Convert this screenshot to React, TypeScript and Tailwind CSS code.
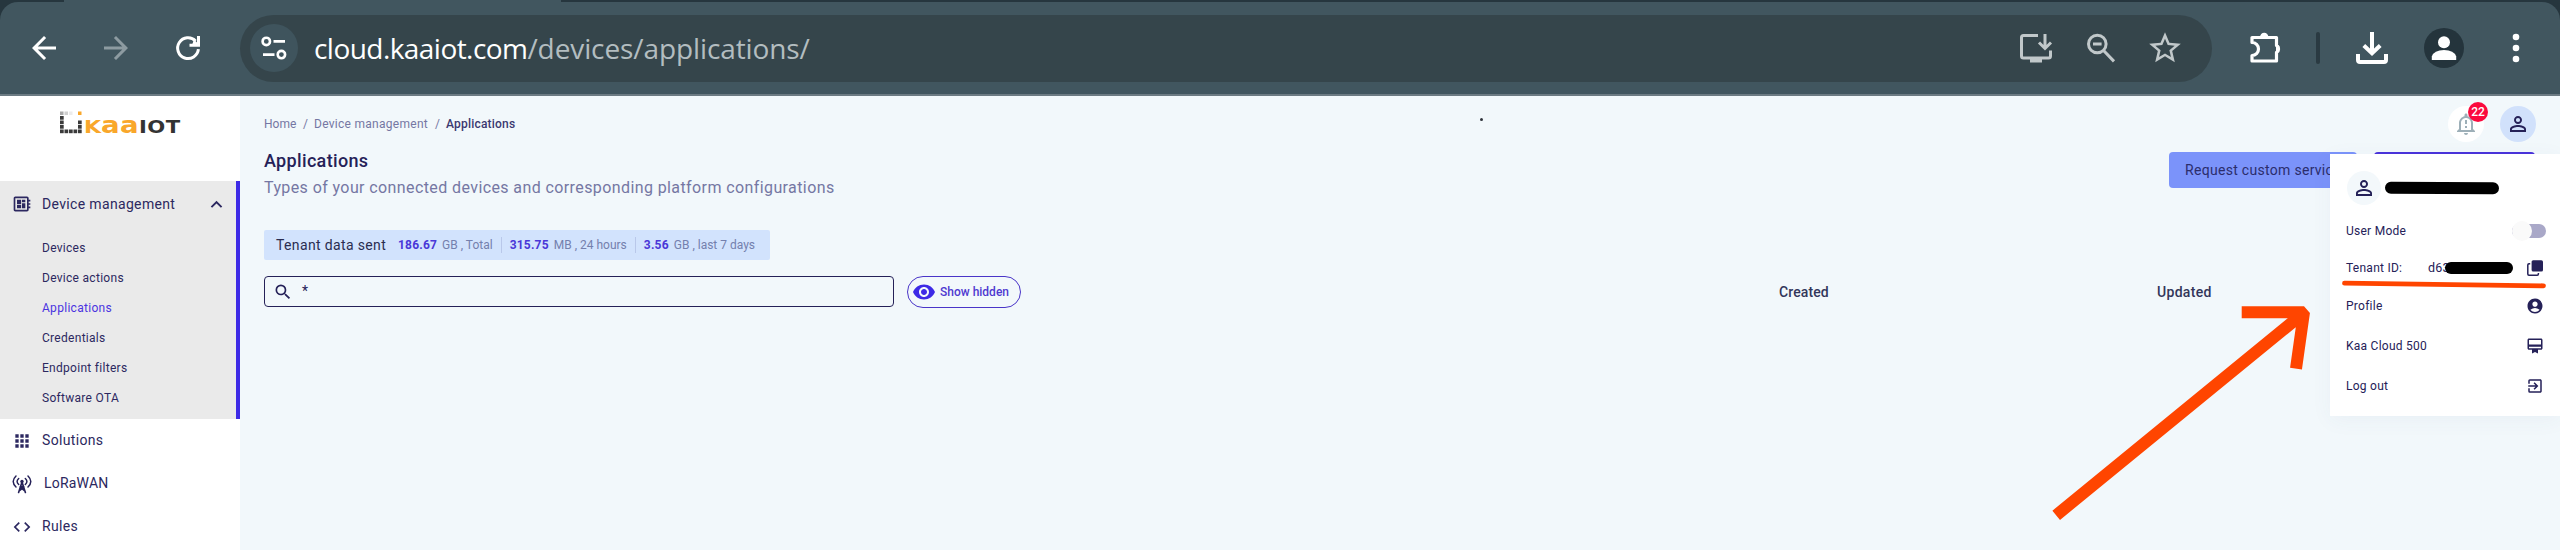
import React from "react";
import {
  MdAccountCircle,
  MdApps,
  MdArrowBack,
  MdArrowForward,
  MdCode,
  MdDeveloperBoard,
  MdExitToApp,
  MdExpandLess,
  MdOutlineCardMembership,
  MdOutlineNotificationImportant,
  MdPersonOutline,
  MdSearch,
  MdStarBorder,
  MdVisibility,
} from "react-icons/md";

function ReloadIcon() {
  return (
    <svg className="ml-[36px] size-[36px]" viewBox="0 0 36 36" fill="none" stroke="#fff" strokeWidth="3">
      <path d="M28.4 19.2A10.4 10.4 0 1 1 25.6 11" />
      <path d="M28.5 6V15.3H19.5" strokeWidth="3" />
      <path d="M24 9.5L28 13.5V15H22Z" fill="#fff" stroke="none" />
    </svg>
  );
}

function TuneIcon() {
  return (
    <svg className="size-[30px]" viewBox="0 0 30 30" fill="none" stroke="#fff" strokeWidth="2.6">
      <circle cx="7.3" cy="8.4" r="3.7" />
      <path d="M14.5 8.4H26M4 21.6H15.5" />
      <circle cx="22.4" cy="21.6" r="3.7" />
    </svg>
  );
}

function InstallIcon() {
  return (
    <svg className="h-[32px] w-[34px]" viewBox="0 0 34 32" fill="none" stroke="#c1c8ca" strokeWidth="3">
      <path d="M19 3.5H4.5Q2.5 3.5 2.5 5.5V24Q2.5 26 4.5 26H29.5Q31.5 26 31.5 24V18.5" />
      <path d="M11 26H23V30.5H11Z" fill="#c1c8ca" stroke="none" />
      <path d="M26 2V16M20 10.5L26 16.5L32 10.5" />
    </svg>
  );
}

function ZoomOutIcon() {
  return (
    <svg className="ml-[33px] h-[30px] w-[30px]" viewBox="0 0 30 30" fill="none" stroke="#c1c8ca" strokeWidth="3">
      <circle cx="11.3" cy="11" r="8.8" />
      <path d="M7 11H15.6M17.8 17.8L28 28.4" />
    </svg>
  );
}

function PuzzleIcon() {
  return (
    <svg className="h-[36px] w-[36px]" viewBox="0 0 36 36">
      <path
        d="M6.5 7.5H29.500V15.5A4 4 0 0 1 29.500 22.500V31H5V25.500A6.200 6.200 0 0 0 5 12.500V7.500Z"
        fill="none"
        stroke="#fff"
        strokeWidth="3.2"
        strokeLinejoin="round"
      />
      <path d="M13 7.500A4.200 4.800 0 0 1 21.400 7.500ZM29 14A4.600 4.600 0 0 1 29 23Z" fill="#fff" />
    </svg>
  );
}

function DownloadIcon() {
  return (
    <svg className="ml-[36px] h-[32px] w-[32px]" viewBox="0 0 32 32" fill="none" stroke="#fff" strokeWidth="4">
      <path d="M16 0V21M7.800 13.500L16 21.300L24.200 13.500" />
      <path d="M2 22V28Q2 30 4 30H28Q30 30 30 28V22" />
    </svg>
  );
}

function AntennaIcon() {
  return (
    <svg className="size-[20px]" viewBox="0 0 20 20" fill="none" stroke="#252158" strokeWidth="1.500" strokeLinecap="round">
      <path d="M4 2Q-1.600 7.500 4 13M16 2Q21.600 7.500 16 13" />
      <path d="M6.700 4.500Q3.500 7.500 6.700 10.500M13.300 4.500Q16.500 7.500 13.300 10.500" />
      <circle cx="10" cy="7.500" r="1.700" fill="#252158" stroke="none" />
      <path d="M10 8L6.600 18.500M10 8L13.400 18.500M8.500 12.500H11.500M7.500 16.500L12 13M12.500 16.500L8 13" strokeWidth="1.600" />
    </svg>
  );
}

function CopyIcon() {
  return (
    <svg className="size-[18px]" viewBox="0 0 18 18">
      <rect x="5.600" y="1.200" width="11.400" height="11.400" rx="1.600" fill="#252158" />
      <path d="M4.200 4.800H3Q1.800 4.800 1.800 6V15Q1.800 16.200 3 16.200H11.200Q12.400 16.200 12.400 15V14" fill="none" stroke="#252158" strokeWidth="1.500" />
    </svg>
  );
}

function Logo() {
  const dark = [
    [0, 5], [0, 9.5], [0, 14], [0, 18.5], [4.5, 18.5], [9, 18.5], [13.5, 18.5], [18, 18.5], [18, 14], [18, 9.5],
  ];
  return (
    <svg className="h-[40px] w-[130px]" viewBox="0 -8 130 40" fontFamily="DejaVu Sans" fontWeight="700">
      <rect x="0" y="0.500" width="3.500" height="3.500" fill="#a9a9a9" />
      <rect x="4.500" y="0.500" width="3.500" height="3.500" fill="#cfcfcf" />
      <rect x="9" y="0.500" width="3.500" height="3.500" fill="#ececec" />
      <rect x="18" y="0.500" width="3.500" height="3.500" fill="#f9a72b" />
      {dark.map(([x, y]) => (
        <rect key={`${x}-${y}`} x={x} y={y} width="3.700" height="3.700" fill="#3a3a3a" />
      ))}
      <g fill="#f9a72b">
        <text x="24" y="22.300" fontSize="18" textLength="17.500" lengthAdjust="spacingAndGlyphs">K</text>
        <text x="41" y="22.300" fontSize="23.500" textLength="38" lengthAdjust="spacingAndGlyphs">aa</text>
      </g>
      <text x="79" y="22.300" fontSize="18" fill="#333" textLength="41.500" lengthAdjust="spacingAndGlyphs">IOT</text>
    </svg>
  );
}

function BrowserBar() {
  return (
    <header className="flex h-[96px] flex-col border-b-2 border-[#6c7b83] bg-[#26363e]">
      <div className="flex h-[2px] pl-[64px]">
        <div className="w-[497px] bg-[#41565f]" />
      </div>
      <div className="flex h-[92px] items-center rounded-t-[18px] bg-[#41565f] pl-[26px]">
        <MdArrowBack className="size-[36px] text-white" />
        <MdArrowForward className="ml-[36px] size-[36px] text-[#8d9ba1]" />
        <ReloadIcon />
        <div className="ml-[34px] flex h-[67px] w-[1972px] items-center rounded-full bg-[#35454b] pr-[28px] pl-[10px]">
          <div className="flex size-[48px] items-center justify-center rounded-full bg-[#3f545d]">
            <TuneIcon />
          </div>
          <div className="ml-[16px] flex-1 font-['Open_Sans',sans-serif] text-[28px] whitespace-nowrap">
            <span className="tracking-[-0.55px] text-white">cloud.kaaiot.com</span>
            <span className="tracking-[-0.1px] text-[#b3bdc0]">/devices/applications/</span>
          </div>
          <InstallIcon />
          <ZoomOutIcon />
          <MdStarBorder className="ml-[30px] size-[38px] text-[#c1c8ca]" />
        </div>
        <div className="ml-[35px] flex items-center">
          <PuzzleIcon />
          <div className="ml-[33px] h-[32px] w-[4px] rounded-full bg-[#2a3a42]" />
          <DownloadIcon />
          <div className="ml-[36px] flex size-[40px] items-center justify-center rounded-full bg-[#24343c]">
            <svg className="size-[26px]" viewBox="0 0 26 26" fill="#fff">
              <circle cx="13" cy="7.300" r="6" />
              <path d="M0.800 25V21.500Q3 15 13 15T25.200 21.500V25Z" />
            </svg>
          </div>
          <svg className="ml-[48px] h-[32px] w-[8px]" viewBox="0 0 8 32" fill="#fff">
            <circle cx="4" cy="5" r="3.300" />
            <circle cx="4" cy="16" r="3.300" />
            <circle cx="4" cy="27" r="3.300" />
          </svg>
        </div>
      </div>
    </header>
  );
}

const subItems = ["Devices", "Device actions", "Applications", "Credentials", "Endpoint filters", "Software OTA"];

function Sidebar() {
  return (
    <aside className="flex w-[240px] shrink-0 flex-col bg-white text-[14px] tracking-[0.34px] text-[#2c2860]">
      <div className="h-[85px] pt-[7px] pl-[60px]">
        <Logo />
      </div>
      <div className="border-r-4 border-[#3d2ae6] bg-[#eaeaea] pb-[6px]">
        <div className="flex h-[46px] items-center pl-[12px]">
          <MdDeveloperBoard className="size-[20px]" />
          <span className="ml-[10px] w-[163px]">Device management</span>
          <MdExpandLess className="size-[23px]" />
        </div>
        <ul className="pt-[6px] text-[12px] tracking-[0.29px]">
          {subItems.map((t) => (
            <li key={t} className={`flex h-[30px] items-center pl-[42px] ${t === "Applications" ? "text-[#4a35e0]" : ""}`}>
              {t}
            </li>
          ))}
        </ul>
      </div>
      <div className="flex h-[43px] items-center pl-[12px]">
        <MdApps className="size-[20px]" />
        <span className="ml-[10px]">Solutions</span>
      </div>
      <div className="flex h-[43px] items-center pl-[12px]">
        <AntennaIcon />
        <span className="ml-[12px] tracking-[0.2px]">LoRaWAN</span>
      </div>
      <div className="flex h-[43px] items-center pl-[12px]">
        <MdCode className="size-[20px]" />
        <span className="ml-[10px]">Rules</span>
      </div>
    </aside>
  );
}

function Stat({ value, label }: { value: string; label: string }) {
  return (
    <span className="text-[12px] text-[#7480ad]">
      <b className="mr-[5px] font-bold tracking-[0.2px] text-[#4a38d8]">{value}</b>
      {label}
    </span>
  );
}

function Content() {
  return (
    <main className="flex flex-1 flex-col bg-[#f2f8fb] pl-[24px] text-[#252158]">
      <div className="flex h-[56px] items-center gap-[16px] pr-[24px]">
        <nav className="flex flex-1 items-center text-[12px] tracking-[0.28px] text-[#7577a3]">
          <span className="w-[39px] tracking-normal">Home</span>
          <span className="w-[11px]">/</span>
          <span className="w-[121px]">Device management</span>
          <span className="w-[11px]">/</span>
          <span className="font-medium tracking-[0.2px] text-[#3b3870]">Applications</span>
        </nav>
        <div className="relative flex size-[36px] items-center justify-center rounded-full bg-white">
          <MdOutlineNotificationImportant className="size-[24px] text-[#9dafb8]" />
          <span className="absolute top-[-4px] left-[20px] flex size-[20px] items-center justify-center rounded-full bg-[#fb0a3e] text-[12px] font-medium text-white">
            22
          </span>
        </div>
        <div className="flex size-[36px] items-center justify-center rounded-full bg-[#d1e1fb]">
          <MdPersonOutline className="size-[24px]" />
        </div>
      </div>
      <div className="flex h-[53px] items-start pr-[25px]">
        <div className="flex-1">
          <h1 className="h-[18px] text-[18px] leading-[18px] font-medium tracking-[0.34px]">Applications</h1>
          <p className="text-[16px] leading-[35px] tracking-[0.4px] text-[#7577a3]">
            Types of your connected devices and corresponding platform configurations
          </p>
        </div>
        <button className="h-[36px] w-[188px] rounded-[4px] bg-[#7b93fa] pl-[16px] text-left text-[14px] tracking-[0.3px] whitespace-nowrap text-[#2b2d6c]">
          Request custom services
        </button>
        <div className="ml-[17px] h-[36px] w-[161px] rounded-[4px] bg-[#4a33da]" />
      </div>
      <div className="mt-[25px] flex h-[30px] w-[506px] items-center rounded-[2px] bg-[#d2e3fd] pl-[12px] whitespace-nowrap">
        <span className="w-[122px] text-[14px] tracking-[0.36px] text-[#2a2d50]">Tenant data sent</span>
        <Stat value="186.67" label="GB , Total" />
        <i className="mx-[8px] h-[16px] w-px bg-[#b9c8ea]" />
        <Stat value="315.75" label="MB , 24 hours" />
        <i className="mx-[8px] h-[16px] w-px bg-[#b9c8ea]" />
        <Stat value="3.56" label="GB , last 7 days" />
      </div>
      <div className="mt-[16px] flex h-[32px] items-start">
        <div className="flex h-[31px] w-[630px] items-center rounded-[4px] border border-[#252158] pl-[8px] text-[14px]">
          <MdSearch className="size-[20px]" />
          <span className="ml-[9px]">*</span>
        </div>
        <button className="ml-[13px] flex h-[32px] w-[114px] items-center rounded-full border border-[#4a35c8] pl-[4px] text-[12px] font-medium text-[#4f3ad0]">
          <MdVisibility className="size-[24px] text-[#3d2ae6]" />
          <span className="ml-[4px]">Show hidden</span>
        </button>
        <div className="ml-[758px] flex text-[14px] leading-[32px] font-medium text-[#32365a]">
          <span className="w-[378px] tracking-[0.1px]">Created</span>
          <span className="tracking-[0.3px]">Updated</span>
        </div>
      </div>
    </main>
  );
}

function AccountMenu() {
  return (
    <div className="absolute top-[154px] left-[2330px] flex h-[262px] w-[230px] flex-col bg-white pr-[16px] pl-[16px] text-[12px] tracking-[0.26px] text-[#252158] shadow-[0_4px_20px_rgba(60,80,140,0.05)]">
      <div className="flex h-[57px] items-end">
        <div className="flex h-[46px] items-center pl-px">
          <div className="flex size-[34px] items-center justify-center rounded-full bg-[#f3f8fb]">
            <MdPersonOutline className="size-[24px]" />
          </div>
          <div className="ml-[4px] h-[12px] w-[114px] rotate-[0.3deg] rounded-full bg-black" />
        </div>
      </div>
      <div className="flex h-[40px] items-center justify-between">
        <span>User Mode</span>
        <div className="mr-[-2px] flex h-[14px] w-[34px] items-center rounded-full bg-[#a9a8c8]">
          <div className="size-[20px] shrink-0 rounded-full bg-[#fafafa]" />
        </div>
      </div>
      <div className="flex h-[34px] items-center">
        <span className="w-[83px]">Tenant ID:</span>
        <span className="w-[17px] text-[12.5px]">d63</span>
        <div className="z-10 h-[12px] w-[69px] rounded-full bg-black" />
        <div className="ml-[13px]">
          <CopyIcon />
        </div>
      </div>
      <div className="flex h-[41px] items-center justify-between">
        <span>Profile</span>
        <MdAccountCircle className="size-[18px]" />
      </div>
      <div className="flex h-[40px] items-center justify-between">
        <span>Kaa Cloud 500</span>
        <MdOutlineCardMembership className="size-[18px]" />
      </div>
      <div className="flex h-[40px] items-center justify-between">
        <span>Log out</span>
        <MdExitToApp className="size-[18px]" />
      </div>
    </div>
  );
}

export default function App() {
  return (
    <div className="relative flex h-[550px] w-[2560px] flex-col overflow-hidden font-['Roboto',sans-serif]">
      <BrowserBar />
      <div className="flex flex-1">
        <Sidebar />
        <Content />
      </div>
      <div className="absolute top-[118px] left-[1480px] size-[3px] rounded-full bg-[#30343c]" />
      <AccountMenu />
      <svg className="pointer-events-none absolute top-[270px] left-[2040px] h-[270px] w-[520px]" viewBox="2040 270 520 270" fill="none" stroke="#ff4500">
        <path d="M2344.500 283.200L2543.500 285.800" strokeWidth="4.800" strokeLinecap="round" />
        <path d="M2056.200 515.300L2303 313.500M2241.700 312.200H2304L2296 368.600" strokeWidth="12" strokeLinejoin="bevel" />
      </svg>
    </div>
  );
}
